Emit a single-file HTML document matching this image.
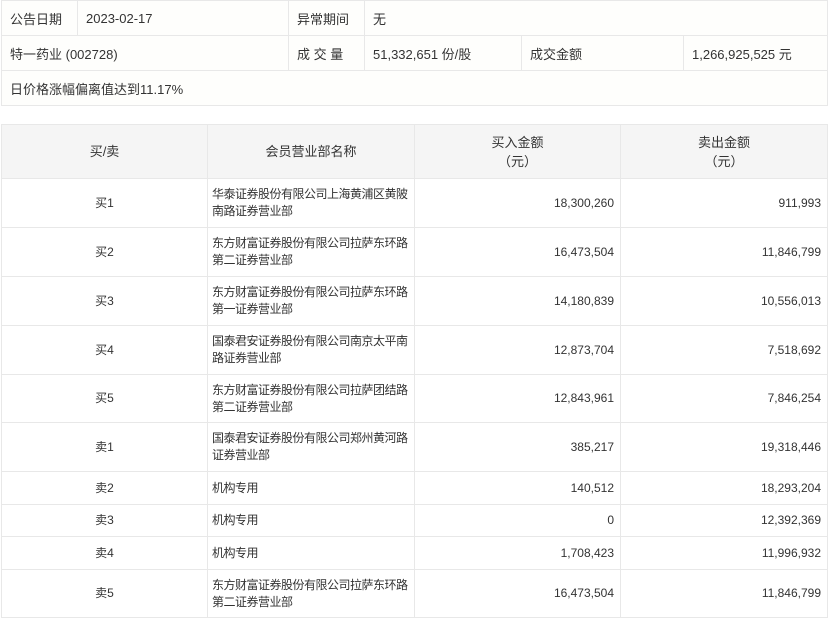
<!DOCTYPE html>
<html><head><meta charset="utf-8"><style>
*{margin:0;padding:0;box-sizing:border-box}
body{width:829px;height:621px;background:#fff;font-family:"Liberation Sans","Noto Sans CJK SC",sans-serif;color:#333;position:relative;overflow:hidden}
table{border-collapse:collapse;position:absolute;left:1px;table-layout:fixed}
td,th{border:1px solid #e8e8e8;font-weight:normal}
#t1{top:0;width:826px;background:#fefefc;font-size:13px}
#t1 td{height:35px;padding:0 8px}
#t2{top:124px;width:826px;font-size:12px}
#t2 th{background:#f5f5f5;height:54px;font-size:13px;line-height:19px}
#t2 td{padding:0 6px;line-height:17px}
#t2 td.n{padding:0 0 0 4px;white-space:nowrap;overflow:hidden;letter-spacing:-0.5px}
.c{text-align:center}.r{text-align:right}
</style></head><body>
<table id="t1">
<colgroup><col style="width:76px"><col style="width:211px"><col style="width:76px"><col style="width:157px"><col style="width:162px"><col style="width:144px"></colgroup>
<tr><td>公告日期</td><td>2023-02-17</td><td>异常期间</td><td colspan="3">无</td></tr>
<tr><td colspan="2">特一药业 (002728)</td><td>成 交 量</td><td>51,332,651 份/股</td><td>成交金额</td><td>1,266,925,525 元</td></tr>
<tr><td colspan="6">日价格涨幅偏离值达到11.17%</td></tr>
</table>
<table id="t2">
<colgroup><col style="width:206px"><col style="width:207px"><col style="width:206px"><col style="width:207px"></colgroup>
<tr><th>买/卖</th><th>会员营业部名称</th><th>买入金额<br>（元）</th><th>卖出金额<br>（元）</th></tr>
<tr style="height:49px"><td class="c">买1</td><td class="n">华泰证券股份有限公司上海黄浦区黄陂<br>南路证券营业部</td><td class="r">18,300,260</td><td class="r">911,993</td></tr>
<tr style="height:49px"><td class="c">买2</td><td class="n">东方财富证券股份有限公司拉萨东环路<br>第二证券营业部</td><td class="r">16,473,504</td><td class="r">11,846,799</td></tr>
<tr style="height:49px"><td class="c">买3</td><td class="n">东方财富证券股份有限公司拉萨东环路<br>第一证券营业部</td><td class="r">14,180,839</td><td class="r">10,556,013</td></tr>
<tr style="height:49px"><td class="c">买4</td><td class="n">国泰君安证券股份有限公司南京太平南<br>路证券营业部</td><td class="r">12,873,704</td><td class="r">7,518,692</td></tr>
<tr style="height:48px"><td class="c">买5</td><td class="n">东方财富证券股份有限公司拉萨团结路<br>第二证券营业部</td><td class="r">12,843,961</td><td class="r">7,846,254</td></tr>
<tr style="height:49px"><td class="c">卖1</td><td class="n">国泰君安证券股份有限公司郑州黄河路<br>证券营业部</td><td class="r">385,217</td><td class="r">19,318,446</td></tr>
<tr style="height:33px"><td class="c">卖2</td><td class="n">机构专用</td><td class="r">140,512</td><td class="r">18,293,204</td></tr>
<tr style="height:32px"><td class="c">卖3</td><td class="n">机构专用</td><td class="r">0</td><td class="r">12,392,369</td></tr>
<tr style="height:33px"><td class="c">卖4</td><td class="n">机构专用</td><td class="r">1,708,423</td><td class="r">11,996,932</td></tr>
<tr style="height:48px"><td class="c">卖5</td><td class="n">东方财富证券股份有限公司拉萨东环路<br>第二证券营业部</td><td class="r">16,473,504</td><td class="r">11,846,799</td></tr>
</table>
</body></html>
